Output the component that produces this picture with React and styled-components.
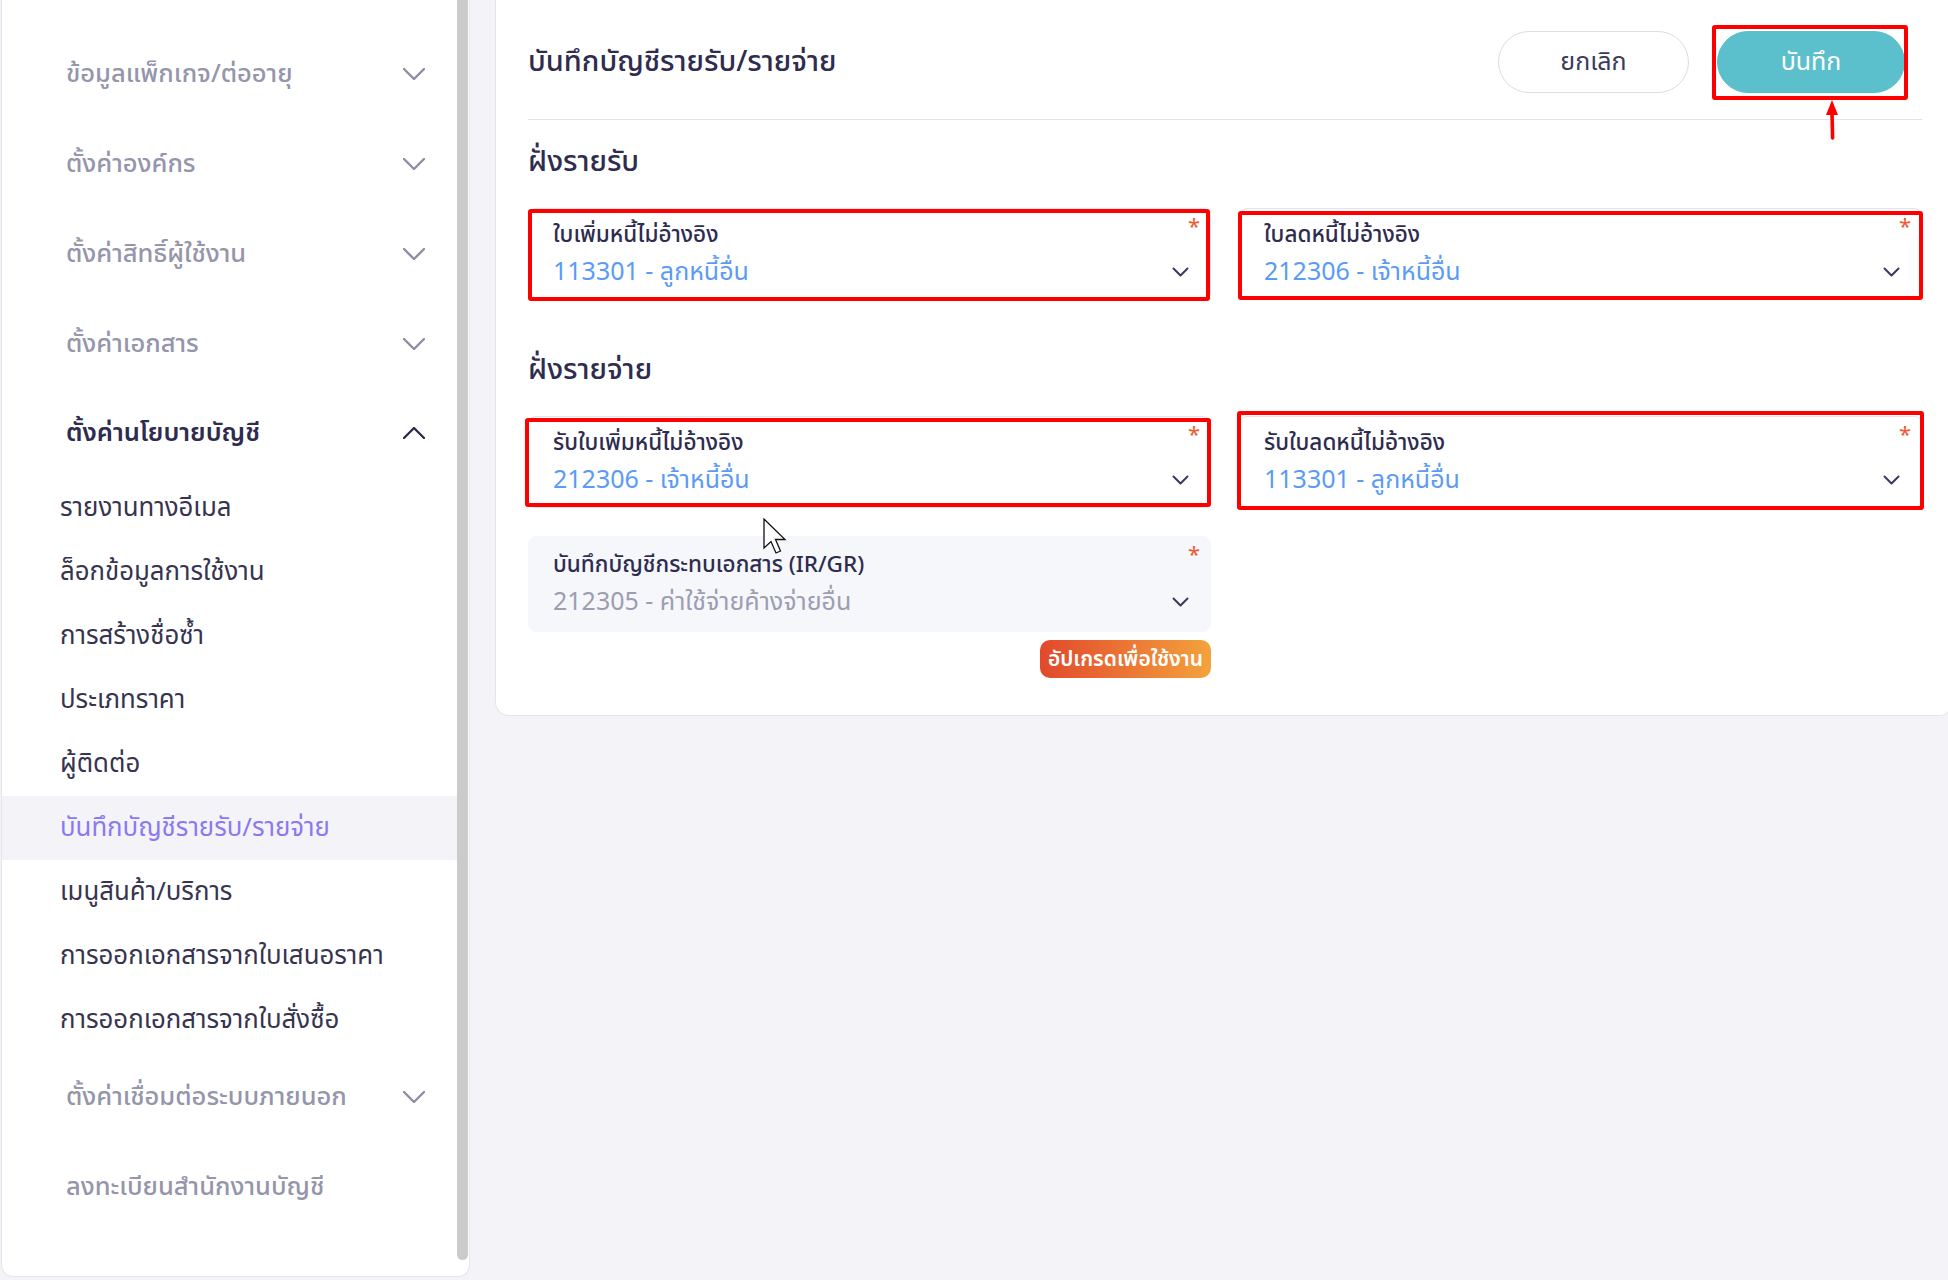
import React from 'react';
import styled, { createGlobalStyle } from 'styled-components';

const GlobalStyle = createGlobalStyle`
  html, body { margin: 0; padding: 0; }
  body {
    background: #f4f4f8;
    font-family: "Noto Sans Thai", "Noto Sans Thai UI", "Noto Sans", "DejaVu Sans", sans-serif;
    width: 1948px;
    height: 1280px;
    overflow: hidden;
  }
  * { box-sizing: border-box; }
`;

const Page = styled.div`
  display: flex;
  align-items: flex-start;
  height: 1280px;
`;

const Sidebar = styled.aside`
  margin-left: 1px;
  width: 469px;
  height: 1277px;
  flex: none;
  background: #fff;
  border: 1px solid #e4e4ec;
  border-top: none;
  border-radius: 0 0 12px 12px;
  display: flex;
  overflow: hidden;
`;

const Menu = styled.nav`
  flex: 1;
  padding-top: 29px;
  display: flex;
  flex-direction: column;
`;

const Scrollbar = styled.div`
  width: 11px;
  height: 1260px;
  background: #cbcbcb;
  border-radius: 0 0 6px 6px;
  margin-right: 1px;
`;

const GroupHeader = styled.div`
  height: ${(p) => p.$h || 90}px;
  display: flex;
  align-items: center;
  justify-content: space-between;
  padding: 0 32px 0 64px;
  font-size: 25.5px;
  color: ${(p) => (p.$open ? '#2e2c4f' : '#9595ab')};
  font-weight: ${(p) => (p.$open ? 600 : 500)};
  white-space: nowrap;
`;

const SubItem = styled.div`
  height: 64px;
  display: flex;
  align-items: center;
  padding-left: 58px;
  font-size: 25.8px;
  color: ${(p) => (p.$active ? '#8b79f2' : '#36344f')};
  background: ${(p) => (p.$active ? '#f4f4f8' : 'transparent')};
  white-space: nowrap;
`;

const Main = styled.main`
  margin-left: 25px;
  flex: none;
`;

const Card = styled.section`
  position: relative;
  width: 1458px;
  background: #fff;
  border: 1px solid #e4e4ec;
  border-top: none;
  border-radius: 0 0 14px 14px;
  padding: 0 30px 37px 32px;
`;

const CardHeader = styled.header`
  display: flex;
  align-items: center;
  justify-content: space-between;
  padding: 31px 17px 26px 0;
  border-bottom: 1px solid #e2e2ea;
`;

const Title = styled.h1`
  margin: 0;
  font-size: 29px;
  font-weight: 500;
  color: #2e2c4f;
`;

const Actions = styled.div`
  display: flex;
  gap: 28px;
`;

const Button = styled.button`
  height: 62px;
  width: ${(p) => p.$w}px;
  border-radius: 31px;
  font-family: inherit;
  font-size: 25px;
  border: 1px solid ${(p) => (p.$primary ? '#5bc0cb' : '#dcdce6')};
  background: ${(p) => (p.$primary ? '#5bc0cb' : '#fff')};
  color: ${(p) => (p.$primary ? '#fff' : '#3b3a5c')};
  cursor: pointer;
`;

const Marked = styled.div`
  position: relative;
  &::after {
    content: '';
    position: absolute;
    top: ${(p) => p.$t ?? 0}px;
    right: ${(p) => p.$r ?? 0}px;
    bottom: ${(p) => p.$b ?? 0}px;
    left: ${(p) => p.$l ?? 0}px;
    border: 4px solid #ff0000;
    border-radius: 3px;
    pointer-events: none;
  }
`;

const UpArrow = styled.svg`
  position: absolute;
  left: 109px;
  top: 69px;
`;

const SectionTitle = styled.h2`
  margin: ${(p) => p.$mt}px 0 29px;
  font-size: 29px;
  font-weight: 500;
  line-height: 34px;
  color: #2e2c4f;
`;

const FieldGrid = styled.div`
  display: grid;
  grid-template-columns: 683px 683px;
  column-gap: 28px;
  row-gap: 28px;
`;

const Field = styled.div`
  position: relative;
  height: ${(p) => (p.$disabled ? 96 : 92)}px;
  border: 1px solid ${(p) => (p.$disabled ? '#f6f7fb' : '#e3e3ec')};
  background: ${(p) => (p.$disabled ? '#f6f7fb' : '#fff')};
  border-radius: 8px;
  padding: ${(p) => (p.$disabled ? 14 : 12)}px 21px 0 24px;
  display: flex;
  flex-direction: column;
`;

const Label = styled.div`
  font-size: 22.5px;
  font-weight: 500;
  line-height: 28px;
  color: #2e2c4f;
  white-space: nowrap;
`;

const ValueRow = styled.div`
  display: flex;
  align-items: center;
  justify-content: space-between;
  margin-top: 6px;
`;

const Value = styled.div`
  font-size: 25px;
  line-height: 34px;
  color: ${(p) => (p.$disabled ? '#9d9db1' : '#5a9bf6')};
  white-space: nowrap;
`;

const Required = styled.span`
  position: absolute;
  top: 2px;
  right: 10px;
  font-size: 22px;
  color: #ee5a2e;
`;

const BadgeRow = styled.div`
  display: flex;
  justify-content: flex-end;
  margin-top: 8px;
`;

const UpgradeBadge = styled.span`
  height: 38px;
  width: 171px;
  display: flex;
  align-items: center;
  justify-content: center;
  border-radius: 10px;
  background: linear-gradient(90deg, #e1492b 0%, #f4a23c 100%);
  color: #fff;
  font-size: 21px;
  font-weight: 600;
  white-space: nowrap;
`;

const Cursor = styled.svg`
  position: absolute;
  left: 267px;
  top: 518px;
`;

const SideChevron = ({ up, color }) => (
  <svg width="22" height="12" viewBox="0 0 22 12" fill="none">
    <polyline
      points={up ? '1,11 11,1 21,11' : '1,1 11,11 21,1'}
      stroke={color}
      strokeWidth="2.4"
      strokeLinecap="round"
      strokeLinejoin="round"
    />
  </svg>
);

const FieldChevron = () => (
  <svg width="17" height="10" viewBox="0 0 17 10" fill="none">
    <polyline points="1.5,1.5 8.5,8.5 15.5,1.5" stroke="#3b3a5c" strokeWidth="2" strokeLinecap="round" strokeLinejoin="round" />
  </svg>
);

const SelectField = ({ label, value, disabled }) => (
  <Field $disabled={disabled}>
    <Required>*</Required>
    <Label>{label}</Label>
    <ValueRow>
      <Value $disabled={disabled}>{value}</Value>
      <FieldChevron />
    </ValueRow>
  </Field>
);

const groupsTop = [
  'ข้อมูลแพ็กเกจ/ต่ออายุ',
  'ตั้งค่าองค์กร',
  'ตั้งค่าสิทธิ์ผู้ใช้งาน',
  'ตั้งค่าเอกสาร',
];

const subItems = [
  'รายงานทางอีเมล',
  'ล็อกข้อมูลการใช้งาน',
  'การสร้างชื่อซ้ำ',
  'ประเภทราคา',
  'ผู้ติดต่อ',
  'บันทึกบัญชีรายรับ/รายจ่าย',
  'เมนูสินค้า/บริการ',
  'การออกเอกสารจากใบเสนอราคา',
  'การออกเอกสารจากใบสั่งซื้อ',
];

export default function App() {
  return (
    <>
      <GlobalStyle />
      <Page>
        <Sidebar>
          <Menu>
            {groupsTop.map((g) => (
              <GroupHeader key={g}>
                <span>{g}</span>
                <SideChevron color="#8d8da6" />
              </GroupHeader>
            ))}
            <GroupHeader $open $h={87}>
              <span>ตั้งค่านโยบายบัญชี</span>
              <SideChevron up color="#2e2c4f" />
            </GroupHeader>
            {subItems.map((s) => (
              <SubItem key={s} $active={s === 'บันทึกบัญชีรายรับ/รายจ่าย'}>
                {s}
              </SubItem>
            ))}
            <GroupHeader>
              <span>ตั้งค่าเชื่อมต่อระบบภายนอก</span>
              <SideChevron color="#8d8da6" />
            </GroupHeader>
            <GroupHeader>
              <span>ลงทะเบียนสำนักงานบัญชี</span>
            </GroupHeader>
          </Menu>
          <Scrollbar />
        </Sidebar>

        <Main>
          <Card>
            <CardHeader>
              <Title>บันทึกบัญชีรายรับ/รายจ่าย</Title>
              <Actions>
                <Button $w={191}>ยกเลิก</Button>
                <Marked $t={-6} $r={-3} $b={-7} $l={-5}>
                  <Button $w={188} $primary>บันทึก</Button>
                  <UpArrow width="12" height="40" viewBox="0 0 12 40">
                    <polygon points="6,0 12,15 0,15" fill="#ff0000" />
                    <line x1="6" y1="12" x2="6.6" y2="38" stroke="#ff0000" strokeWidth="3.6" strokeLinecap="round" />
                  </UpArrow>
                </Marked>
              </Actions>
            </CardHeader>

            <SectionTitle $mt={25}>ฝั่งรายรับ</SectionTitle>
            <FieldGrid>
              <Marked $t={1} $r={1} $b={-1} $l={0}>
                <SelectField label="ใบเพิ่มหนี้ไม่อ้างอิง" value="113301 - ลูกหนี้อื่น" />
              </Marked>
              <Marked $t={3} $r={-1} $b={0} $l={-1}>
                <SelectField label="ใบลดหนี้ไม่อ้างอิง" value="212306 - เจ้าหนี้อื่น" />
              </Marked>
            </FieldGrid>

            <SectionTitle $mt={53}>ฝั่งรายจ่าย</SectionTitle>
            <FieldGrid>
              <Marked $t={2} $r={0} $b={1} $l={-3}>
                <SelectField label="รับใบเพิ่มหนี้ไม่อ้างอิง" value="212306 - เจ้าหนี้อื่น" />
              </Marked>
              <Marked $t={-5} $r={-2} $b={-2} $l={-2}>
                <SelectField label="รับใบลดหนี้ไม่อ้างอิง" value="113301 - ลูกหนี้อื่น" />
              </Marked>
              <div>
                <SelectField disabled label="บันทึกบัญชีกระทบเอกสาร (IR/GR)" value="212305 - ค่าใช้จ่ายค้างจ่ายอื่น" />
                <BadgeRow>
                  <UpgradeBadge>อัปเกรดเพื่อใช้งาน</UpgradeBadge>
                </BadgeRow>
              </div>
            </FieldGrid>

            <Cursor width="26" height="40" viewBox="0 0 26 40">
              <path
                d="M1 1 L1 30 L8 23.5 L13 35 L17.5 33 L12.5 21.5 L22 21.5 Z"
                fill="#fff"
                stroke="#111"
                strokeWidth="1.3"
                strokeLinejoin="miter"
              />
            </Cursor>
          </Card>
        </Main>
      </Page>
    </>
  );
}
